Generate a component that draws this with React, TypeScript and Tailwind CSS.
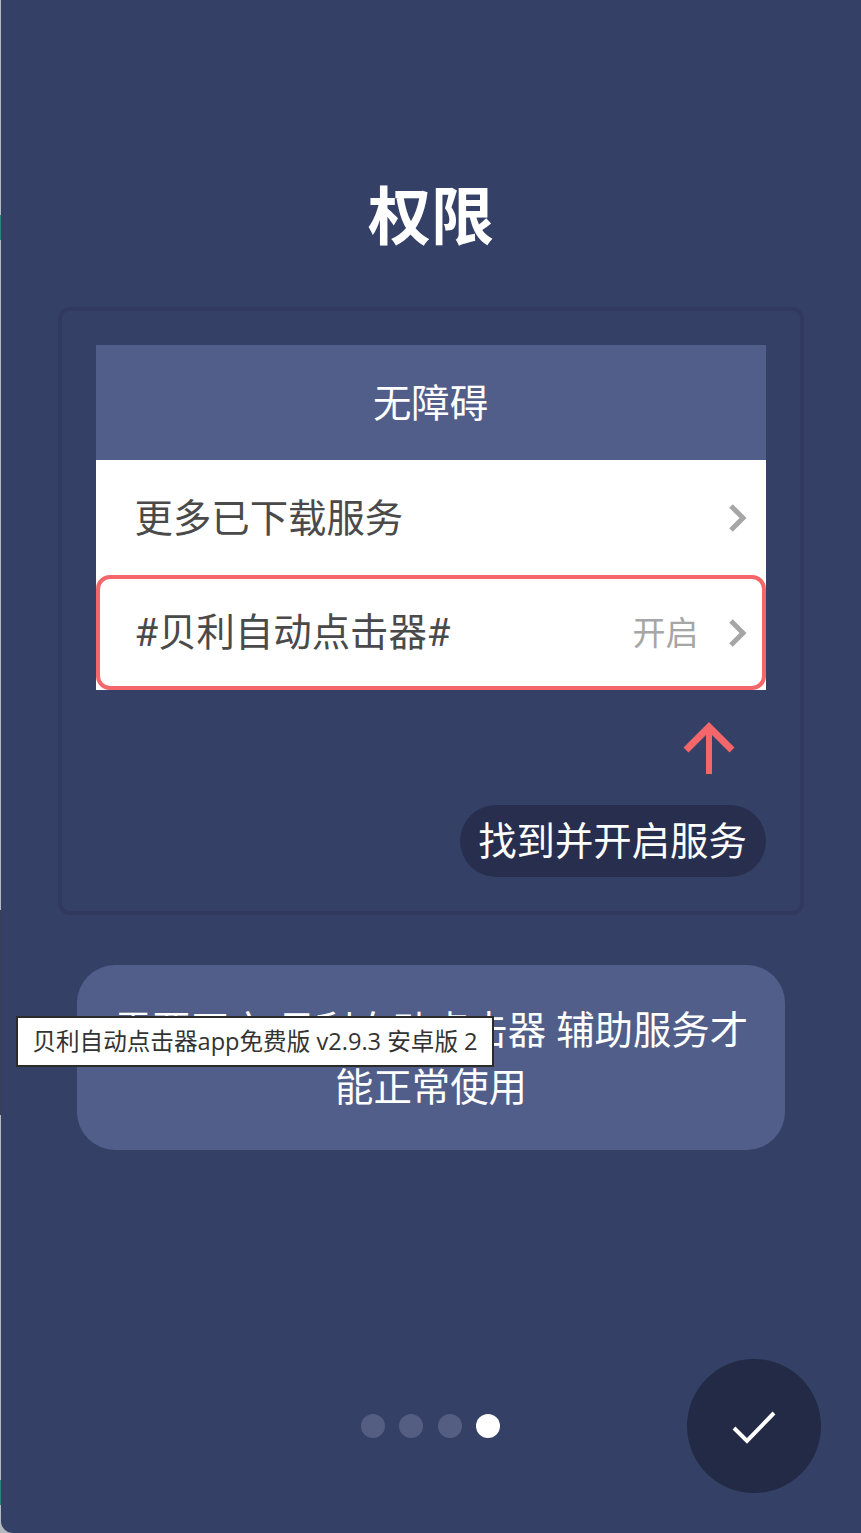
import React from "react";

const fontStack = "font-['Open_Sans','Noto_Sans_CJK_SC',sans-serif]";

const Chevron = () => (
  <svg width="20" height="30" viewBox="0 0 20 30" className="shrink-0">
    <path d="M3 3 L15 15 L3 27" fill="none" stroke="#a6a6a6" strokeWidth="5" />
  </svg>
);

const App: React.FC = () => {
  return (
    <div className="relative h-[1533px] w-[861px] overflow-hidden bg-[#b4b8c0] pl-px">
      {/* window edge behind the screenshot */}
      <span className="absolute top-[215px] left-0 h-[25px] w-px bg-[#2f8078]" />
      <span className="absolute top-[910px] left-0 h-[205px] w-px bg-[#3a3f55]" />
      <span className="absolute top-[1480px] left-0 h-[25px] w-px bg-[#2f8078]" />

      <div className={`relative flex h-[1533px] w-[860px] flex-col items-center overflow-hidden rounded-bl-[12px] bg-[#344066] ${fontStack}`}>
        <h1 className="mt-[172px] h-[86px] text-center text-[63px] leading-[86px] font-bold text-white">权限</h1>

        <div className="mt-[49px] ml-[-1px] flex h-[608px] w-[746px] flex-col rounded-[12px] border-4 border-[#313a5e] px-[34px] pt-[34px]">
          <div className="flex h-[115px] items-center justify-center bg-[#525e8a] text-[38.4px] text-white">无障碍</div>
          <div className="flex h-[115px] items-center justify-between bg-white pr-[18px] pl-[39px] text-[38.4px] text-[#4a4a4a]">
            <span>更多已下载服务</span>
            <Chevron />
          </div>
          <div className="h-[115px] bg-white">
            <div className="flex h-full items-center rounded-[14px] border-4 border-[#f4666a] pr-[14px] pl-[35px] text-[#4a4a4a]">
              <span className="font-['Roboto','Noto_Sans_CJK_SC',sans-serif] text-[38.4px]">#贝利自动点击器#</span>
              <span className="mr-[29px] ml-auto text-[33px] text-[#a6a6a6]">开启</span>
              <Chevron />
            </div>
          </div>
          <div className="mt-[32px] flex justify-end pr-[31px]">
            <svg width="52" height="52" viewBox="0 0 52 52">
              <path d="M26 52 V6" fill="none" stroke="#f4666a" strokeWidth="6" />
              <path d="M3 28 L26 5 L49 28" fill="none" stroke="#f4666a" strokeWidth="7" />
            </svg>
          </div>
          <div className="mt-[31px] flex justify-end">
            <span className="flex h-[72px] w-[306px] items-center justify-center rounded-full bg-[#282f4e] text-[38.4px] text-white">找到并开启服务</span>
          </div>
        </div>

        <div className="mt-[50px] flex h-[185px] w-[708px] items-center rounded-[38px] bg-[#525e8a] px-[30px] text-center text-[38.4px] leading-[57px] text-white">
          <p>需要开启 贝利自动点击器 辅助服务才能正常使用</p>
        </div>

        <div className="absolute top-[1414px] left-[360px] flex gap-[14.4px]">
          <span className="size-[24px] rounded-full bg-[#545e82]" />
          <span className="size-[24px] rounded-full bg-[#545e82]" />
          <span className="size-[24px] rounded-full bg-[#545e82]" />
          <span className="size-[24px] rounded-full bg-white" />
        </div>

        <div className="absolute top-[1359px] left-[686px] flex size-[134px] items-center justify-center rounded-full bg-[#232a45]">
          <svg width="44" height="34" viewBox="0 0 44 34" className="mt-[2px]">
            <path d="M2 18 L15 31 L42 3" fill="none" stroke="#ffffff" strokeWidth="4" />
          </svg>
        </div>

        <div className="absolute top-[1016px] left-[15px] flex h-[51px] w-[478px] items-center justify-center border-2 border-[#2b2b2b] bg-white text-[23.6px] whitespace-nowrap text-[#333333]">
          贝利自动点击器app免费版 v2.9.3 安卓版 2
        </div>
      </div>
    </div>
  );
};

export default App;
